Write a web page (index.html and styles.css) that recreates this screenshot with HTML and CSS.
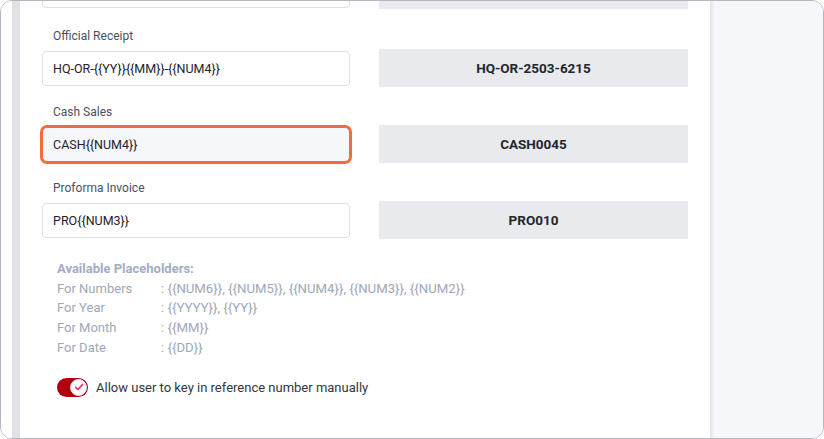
FILE: index.html
```html
<!DOCTYPE html>
<html lang="en">
<head>
<meta charset="utf-8">
<title>Reference Number Settings</title>
<link rel="stylesheet" href="styles.css">
</head>
<body>
<div class="frame">
  <div class="gutter"></div>
  <div class="rail"></div>
  <main class="panel">
    <div class="content">
      <div class="row row-partial">
        <div class="field">
          <div class="input"></div>
        </div>
        <div class="preview"></div>
      </div>

      <div class="row">
        <div class="field">
          <label class="label">Official Receipt</label>
          <div class="input">HQ-OR-{{YY}}{{MM}}-{{NUM4}}</div>
        </div>
        <div class="preview">HQ-OR-2503-6215</div>
      </div>

      <div class="row">
        <div class="field">
          <label class="label">Cash Sales</label>
          <div class="input input-focus">CASH{{NUM4}}</div>
        </div>
        <div class="preview">CASH0045</div>
      </div>

      <div class="row">
        <div class="field">
          <label class="label">Proforma Invoice</label>
          <div class="input">PRO{{NUM3}}</div>
        </div>
        <div class="preview">PRO010</div>
      </div>

      <div class="placeholders">
        <div class="ph-title">Available Placeholders:</div>
        <div class="ph-row"><span class="ph-key">For Numbers</span><span class="ph-val">: {{NUM6}}, {{NUM5}}, {{NUM4}}, {{NUM3}}, {{NUM2}}</span></div>
        <div class="ph-row"><span class="ph-key">For Year</span><span class="ph-val">: {{YYYY}}, {{YY}}</span></div>
        <div class="ph-row"><span class="ph-key">For Month</span><span class="ph-val">: {{MM}}</span></div>
        <div class="ph-row"><span class="ph-key">For Date</span><span class="ph-val">: {{DD}}</span></div>
      </div>

      <div class="toggle-row">
        <span class="toggle">
          <span class="knob">
            <svg width="10" height="10" viewBox="0 0 10 10"><path d="M1.6 5.2 L4 7.4 L8.4 2.4" fill="none" stroke="#e5245c" stroke-width="1.5" stroke-linecap="round" stroke-linejoin="round"/></svg>
          </span>
        </span>
        <span class="toggle-text">Allow user to key in reference number manually</span>
      </div>
    </div>
  </main>
  <div class="divider"></div>
  <aside class="side"></aside>
</div>
</body>
</html>
```

FILE: styles.css
```css
* { box-sizing: border-box; }

html, body {
  margin: 0;
  padding: 0;
  background: #ffffff;
}

.frame {
  width: 824px;
  height: 439px;
  border: 1px solid #b5b7bf;
  border-radius: 12px;
  overflow: hidden;
  display: flex;
  background: #ffffff;
}

.gutter {
  width: 11px;
  flex: none;
  background: #ffffff;
}

.rail {
  width: 8px;
  flex: none;
  background: #e0e2e6;
}

.panel {
  width: 690px;
  flex: none;
  background: #ffffff;
  overflow: hidden;
}

.divider {
  width: 4px;
  flex: none;
  background: linear-gradient(to right, #e2e3e8, #f3f4f8);
}

.side {
  flex: 1;
  background: #f6f7fb;
}

.content {
  padding-left: 22px;
  margin-top: -30px;
}

.row {
  display: flex;
  align-items: flex-end;
  gap: 29px;
  margin-bottom: 18px;
}

.row-partial {
  margin-bottom: 20px;
}

.field {
  width: 308px;
  flex: none;
  display: flex;
  flex-direction: column;
}

.label {
  font-family: "Roboto", "Liberation Sans", sans-serif;
  font-size: 12px;
  line-height: 17px;
  color: #4b5060;
  margin-bottom: 6px;
  padding-left: 11px;
}

.input {
  height: 35px;
  border: 1px solid #dcdfe4;
  border-radius: 4px;
  padding: 0 10px;
  display: flex;
  align-items: center;
  font-family: "Roboto", "Liberation Sans", sans-serif;
  font-size: 12.5px;
  color: #1f2228;
  background: #ffffff;
}

.input-focus {
  border-color: #f26b3a;
  box-shadow: 0 0 0 2px #f26b3a;
  border-radius: 5px;
  background: #f5f7fb;
}

.preview {
  width: 309px;
  flex: none;
  height: 38px;
  margin-bottom: -1px;
  background: #e8eaed;
  display: flex;
  align-items: center;
  justify-content: center;
  font-family: "Roboto", "Liberation Sans", sans-serif;
  font-weight: 700;
  font-size: 13.5px;
  color: #23262c;
}

.placeholders {
  padding-left: 15px;
  margin-top: 21px;
  font-family: "Roboto", "Liberation Sans", sans-serif;
  font-size: 13.2px;
  line-height: 19.7px;
  color: #9ea7bb;
}

.ph-title {
  font-weight: 700;
  font-size: 13px;
  color: #a2acc2;
}

.ph-row {
  display: flex;
}

.ph-key {
  width: 104px;
  flex: none;
  font-size: 13px;
}

.toggle-row {
  display: flex;
  align-items: center;
  gap: 8px;
  margin-top: 20px;
  padding-left: 15px;
}

.toggle {
  width: 31px;
  height: 19px;
  border-radius: 10px;
  background: #b0000f;
  display: flex;
  align-items: center;
  justify-content: flex-end;
  padding-right: 1px;
  flex: none;
}

.knob {
  width: 17px;
  height: 17px;
  border-radius: 50%;
  background: #ffffff;
  border: 1px solid #e3e3e6;
  display: flex;
  align-items: center;
  justify-content: center;
}

.toggle-text {
  font-family: "Roboto", "Liberation Sans", sans-serif;
  font-size: 13px;
  color: #34363b;
}
```
